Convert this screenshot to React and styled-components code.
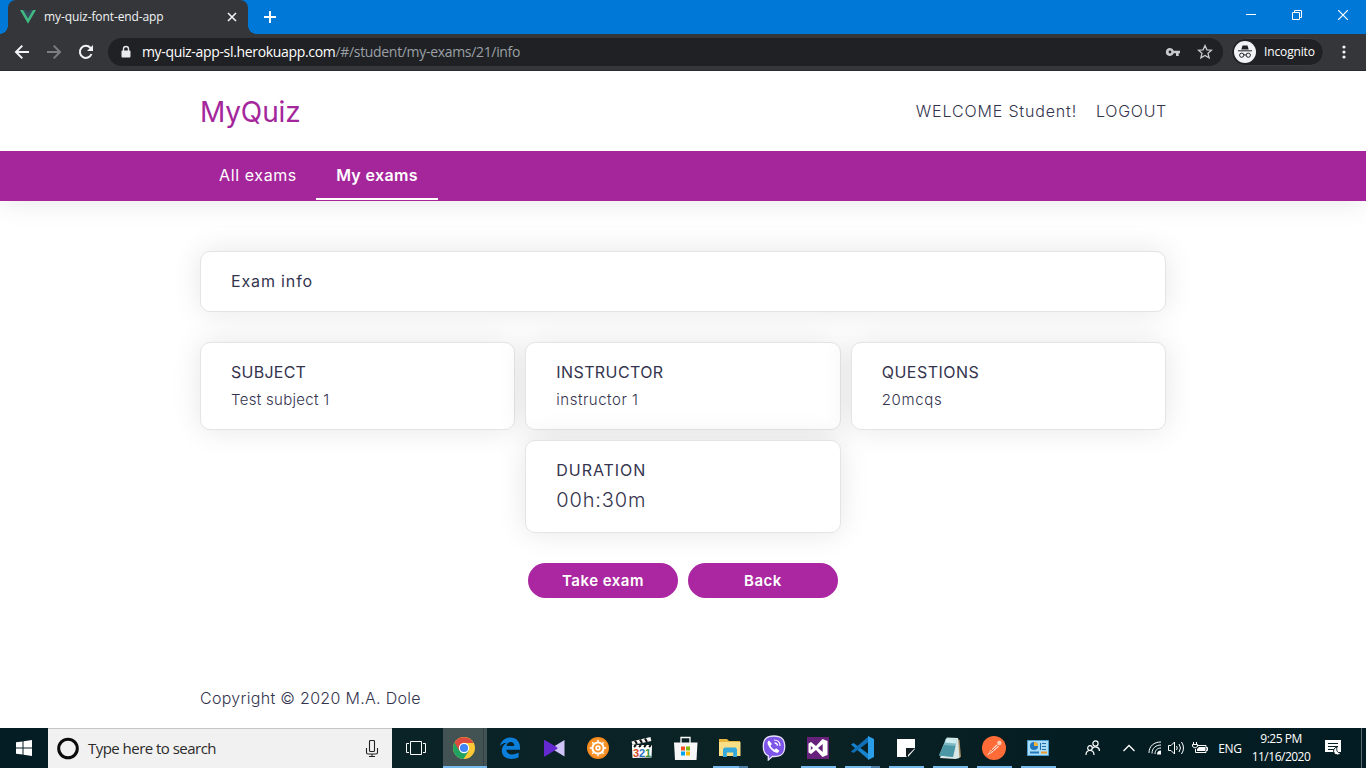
import React from "react";
import styled, { createGlobalStyle, css } from "styled-components";

const Global = createGlobalStyle`
  * { box-sizing: border-box; }
  body { margin: 0; background: #fff; overflow: hidden; }
  svg { display: block; flex: none; }
`;

const ui = `"Open Sans", "Noto Sans", sans-serif`;
const brand = `Inter, "Open Sans", sans-serif`;

const Screen = styled.div`
  width: 1366px;
  height: 768px;
  display: flex;
  flex-direction: column;
  overflow: hidden;
`;

/* ---------- browser chrome ---------- */
const TitleBar = styled.div`
  height: 34px;
  flex: none;
  display: flex;
  background: #0078d7;
  padding-left: 8px;
`;
const Tab = styled.div`
  position: relative;
  width: 240px;
  height: 34px;
  display: flex;
  align-items: center;
  padding: 0 10px 0 12px;
  background: #35363a;
  border-radius: 8px 8px 0 0;
  &::before, &::after {
    content: "";
    position: absolute;
    bottom: 0;
    width: 8px;
    height: 8px;
  }
  &::before { left: -8px; background: radial-gradient(circle at 0 0, transparent 7.5px, #35363a 8px); }
  &::after { right: -8px; background: radial-gradient(circle at 100% 0, transparent 7.5px, #35363a 8px); }
`;
const TabTitle = styled.span`
  flex: 1;
  margin-left: 8px;
  font: 12px/16px ${ui};
  letter-spacing: -0.1px;
  color: #f1f3f4;
  white-space: nowrap;
`;
const NewTab = styled.div`
  flex: 1;
  display: flex;
  align-items: center;
  padding-left: 16px;
`;
const WindowButtons = styled.div`
  display: flex;
  height: 29px;
`;
const WindowButton = styled.div`
  width: 46px;
  display: flex;
  align-items: center;
  justify-content: center;
`;
const Toolbar = styled.div`
  height: 37px;
  flex: none;
  display: flex;
  align-items: center;
  background: #35363a;
  border-bottom: 1px solid #292a2d;
  padding: 0 14px;
`;
const NavIcons = styled.div`
  display: flex;
  width: 94px;
  gap: 16px;
`;
const Address = styled.div`
  width: 1116px;
  height: 28px;
  border-radius: 14px;
  background: #202124;
  display: flex;
  align-items: center;
  padding: 0 10px 0 12px;
  gap: 16px;
`;
const Url = styled.div`
  flex: 1;
  margin-left: -6px;
  font: 14px/20px ${ui};
  letter-spacing: -0.33px;
  color: #fff;
  white-space: nowrap;
`;
const UrlPath = styled.span`
  color: #9aa0a6;
  letter-spacing: -0.32px;
`;
const Incognito = styled.div`
  width: 93px;
  height: 28px;
  margin: 0 12px 0 8px;
  border-radius: 14px;
  background: #202124;
  border: 1px solid #3c3d41;
  display: flex;
  align-items: center;
  padding-left: 2px;
  gap: 8px;
  font: 12px/16px ${ui};
  letter-spacing: -0.15px;
  color: #fff;
`;

/* ---------- page ---------- */
const Page = styled.main`
  height: 657px;
  flex: none;
  display: flex;
  flex-direction: column;
  font-family: ${brand};
  font-weight: 300;
  color: #34344e;
`;
const Container = styled.div`
  width: 966px;
  margin: 0 auto;
`;
const Header = styled.header`
  position: relative;
  z-index: 1;
  background: #fff;
`;
const HeaderRow = styled(Container)`
  height: 80px;
  display: flex;
  align-items: center;
  justify-content: space-between;
`;
const Logo = styled.div`
  font-size: 28px;
  font-weight: 400;
  letter-spacing: -0.15px;
  padding-top: 1px;
  color: #a4269b;
`;
const Account = styled.div`
  display: flex;
  gap: 19px;
  font-size: 16px;
  letter-spacing: 0.7px;
  margin-right: -1px;
`;
const Welcome = styled.span`
  letter-spacing: 0.85px;
`;
const Nav = styled.nav`
  height: 50px;
  flex: none;
  background: #a5269b;
  box-shadow: 0 0 30px rgba(0, 0, 0, 0.1);
`;
const NavRow = styled(Container)`
  display: flex;
`;
const NavItem = styled.a`
  height: 49px;
  width: ${(p) => (p.$active ? 122 : 116)}px;
  display: flex;
  align-items: center;
  justify-content: center;
  white-space: nowrap;
  padding-bottom: 1px;
  border-top: 2px solid transparent;
  border-bottom: 2px solid ${(p) => (p.$active ? "#fff" : "transparent")};
  color: #fff;
  font-size: 16px;
  font-weight: ${(p) => (p.$active ? 600 : 400)};
  letter-spacing: ${(p) => (p.$active ? 0.35 : 0.6)}px;
`;
const Content = styled(Container)`
  padding-top: 50px;
  flex: 1;
`;
const Card = styled.section`
  border: 1px solid #e4e4e4;
  border-radius: 10px;
  background: #fff;
  box-shadow: 0 0 30px rgba(0, 0, 0, 0.1);
  padding: 0 30px;
`;
const TitleCard = styled(Card)`
  height: 61px;
  display: flex;
  align-items: center;
  padding-bottom: 2px;
  font-size: 16px;
  font-weight: 400;
  letter-spacing: 0.85px;
`;
const Cards = styled.div`
  display: flex;
  flex-wrap: wrap;
  justify-content: center;
  gap: 10px;
  margin: 30px 0;
`;
const InfoCard = styled(Card)`
  width: calc((100% - 20px) / 3);
  height: ${(p) => (p.$large ? 93 : 88)}px;
  padding-top: 19px;
`;
const Label = styled.div`
  font-size: 16px;
  font-weight: 400;
  line-height: 20px;
  letter-spacing: ${(p) => p.$track || 0}px;
`;
const Value = styled.div`
  margin-top: ${(p) => (p.$large ? 8 : 8)}px;
  font-size: ${(p) => (p.$large ? 20 : 15)}px;
  line-height: ${(p) => (p.$large ? 25 : 19)}px;
  letter-spacing: ${(p) => p.$track || 0}px;
`;
const Actions = styled.div`
  display: flex;
  justify-content: center;
  gap: 10px;
`;
const Button = styled.button`
  width: 150px;
  height: 35px;
  border: 0;
  border-radius: 18px;
  background: #ab27a1;
  color: #fff;
  font: 600 15px/18px ${brand};
  letter-spacing: 0.5px;
  padding: 0;
`;
const Footer = styled(Container)`
  height: 60px;
  display: flex;
  align-items: center;
  font-size: 16px;
  letter-spacing: 0.3px;
`;

/* ---------- taskbar ---------- */
const Taskbar = styled.footer`
  height: 40px;
  flex: none;
  display: flex;
  background: linear-gradient(90deg, #041d24 0, #0a2326 400px, #0b2225 800px, #041d22 1100px, #031b22 100%);
  color: #fff;
  font-family: ${ui};
`;
const Start = styled.div`
  width: 48px;
  display: flex;
  align-items: center;
  justify-content: center;
`;
const Search = styled.div`
  width: 344px;
  background: #f1f1f1;
  border-top: 1px solid #c3c6c7;
  display: flex;
  align-items: center;
  padding: 0 13px 0 8px;
`;
const SearchText = styled.span`
  flex: 1;
  margin: -2px 0 0 8px;
  font-size: 15px;
  letter-spacing: -0.53px;
  color: #2b2b2b;
`;
const Apps = styled.div`
  display: flex;
  flex: 1;
`;
const running = css`
  &::after {
    content: "";
    position: absolute;
    left: ${(p) => (p.$active ? 0 : 5)}px;
    right: ${(p) => (p.$active ? 0 : 4)}px;
    bottom: 0;
    height: 2px;
    background: ${(p) => p.$stack ? "linear-gradient(90deg,#76b9ed 26px,#4d7fa6 26px)" : "#76b9ed"};
  }
`;
const TaskButton = styled.div`
  position: relative;
  width: 44px;
  margin-right: ${(p) => (p.$active ? 1 : 0)}px;
  padding-right: ${(p) => (p.$active ? 2 : 0)}px;
  display: flex;
  align-items: center;
  justify-content: center;
  background: ${(p) => (p.$active ? "linear-gradient(90deg,#435354 40px,#233437 40px,#435354 41px)" : "none")};
  ${(p) => p.$open && running}
`;
const TaskView = styled.div`
  width: 51px;
  display: flex;
  align-items: center;
  justify-content: center;
  padding-right: 3px;
`;
const Tray = styled.div`
  display: flex;
  align-items: center;
  width: 283px;
`;
const TrayIcon = styled.div`
  width: ${(p) => p.$w}px;
  display: flex;
  justify-content: center;
`;
const Lang = styled.div`
  width: 30px;
  margin-left: 12px;
  text-align: center;
  font-size: 12px;
  letter-spacing: -0.3px;
`;
const Clock = styled.div`
  width: 72px;
  text-align: center;
  font-size: 12px;
  line-height: 18px;
  letter-spacing: -0.5px;
  white-space: nowrap;
`;
const Peek = styled.div`
  width: 5px;
  height: 40px;
  margin-left: auto;
  border-left: 1px solid #59696d;
`;

const s = { fill: "none", stroke: "currentColor" };

const VueIcon = () => (
  <svg width="16" height="16" viewBox="0 0 16 16"><path d="M0 1h3.2L8 9.3 12.8 1H16L8 14.8z" fill="#41b883" /><path d="M3.2 1h3L8 4.2 9.8 1h3L8 9.3z" fill="#35495e" /></svg>
);
const ChromeIcon = () => (
  <svg width="24" height="24" viewBox="0 0 24 24">
    <circle cx="12" cy="12" r="11" fill="#fcc934" />
    <path d="M12 12L2.5 6.5A11 11 0 0 0 11.5 23L16.8 14.8z" fill="#1ea362" />
    <path d="M12 12L7.2 14.7 2.5 6.5A11 11 0 0 1 21.6 7H12z" fill="#dd4b3e" />
    <circle cx="12" cy="12" r="5.2" fill="#fff" /><circle cx="12" cy="12" r="4.1" fill="#4285f4" />
  </svg>
);
const EdgeIcon = () => (
  <svg width="24" height="24" viewBox="0 0 24 24"><path fill="#0b7fdb" d="M2 10.2C3 4.8 7 1.5 12.2 1.5c6 0 9.8 4.1 9.8 9.8v2.5H8.3c.2 3.2 2.8 4.6 6 4.6 2.4 0 4.6-.7 6.3-1.8v4.6c-2 1.1-4.6 1.700-7.300 1.700C7.300 22.900 3.800 19.500 3.800 14.700c0-3.500 1.900-6.300 4.900-7.900C5.700 7 3.400 8.200 2 10.200zM8.500 9.900h7.800c0-2.500-1.400-4-3.700-4-2.200 0-3.700 1.500-4.100 4z" /></svg>
);
const KmIcon = () => (
  <svg width="24" height="24" viewBox="0 0 24 24"><path d="M22.500 4v16.500L9 12.200z" fill="#d0c3f7" /><path d="M2 4.800Q2 3.500 3.200 4.200L15 11.200Q16.200 12.200 15 13L3.200 20.300Q2 21 2 19.700z" fill="#6529d1" /></svg>
);
const WheelIcon = () => (
  <svg width="24" height="24" viewBox="0 0 24 24">
    <circle cx="12" cy="12" r="11" fill="#f58a1c" /><circle cx="12" cy="12" r="9.6" fill="#f7922a" />
    <g stroke="#fff" fill="none"><circle cx="12" cy="12" r="5.6" strokeWidth="2" />
      <path d="M12 3.700v16.600M3.700 12h16.600M6.200 6.200l11.600 11.600M17.800 6.200L6.200 17.800" strokeWidth="1.300" strokeDasharray="2.500 11.600" /></g>
    <circle cx="12" cy="12" r="2.700" fill="#fff" /><circle cx="12" cy="12" r="1" fill="#f58a1c" />
  </svg>
);
const ClapText = styled.text`
  font: 700 11px "Liberation Sans", sans-serif;
`;
const ClapIcon = () => (
  <svg width="24" height="24" viewBox="0 0 24 24">
    <path d="M2 11h20l-.5 10.500L2.500 22z" fill="#fff" />
    <path d="M1.500 5.500L20.500 1l.8 4L2.500 9z" fill="#f5f5f5" /><path d="M5 4.800L7 8M10 3.600L12 7M15 2.400L17 6" stroke="#111" strokeWidth="2" />
    <path d="M2 9h20v2.500H2z" fill="#fff" /><path d="M4 11l2-2M9 11l2-2M14 11l2-2M19 11l2-2" stroke="#111" strokeWidth="2" />
    <ClapText x="3" y="20.500" fill="#d2481e">3</ClapText><ClapText x="9" y="20.500" fill="#2770bd">2</ClapText><ClapText x="15" y="20.500" fill="#3b8f32">1</ClapText>
  </svg>
);
const StoreIcon = () => (
  <svg width="24" height="26" viewBox="0 0 24 26"><path d="M7 8V2.500h9V8" fill="none" stroke="#fff" strokeWidth="1.300" /><path d="M0 7.500h23.500L22.500 25H1z" fill="#f6f6f6" />
    <path d="M7 11.500h4v4H7z" fill="#f25022" /><path d="M12 11.500h4v4h-4z" fill="#7fba00" /><path d="M7 16.500h4v4H7z" fill="#00a4ef" /><path d="M12 16.500h4v4h-4z" fill="#ffb900" /></svg>
);
const FolderIcon = () => (
  <svg width="24" height="24" viewBox="0 0 24 24"><path d="M1 3h8l2 2h11v15H1z" fill="#e8b53c" /><path d="M1 6h21.500v14H1z" fill="#fbdf87" /><path d="M5 21v-8l1.500-1.500h11L19 13v8h-3.800v-4.500H8.800V21z" fill="#35a9dc" /></svg>
);
const ViberIcon = () => (
  <svg width="24" height="26" viewBox="0 0 24 26"><path d="M12 1C4.500 1 1.300 4 1.300 11.500c0 5 1.500 8 5 9.300V25l4-3.500H12c7.500 0 10.700-2.700 10.700-10S19.500 1 12 1z" fill="#7d55e8" stroke="#e7e0fb" strokeWidth="1.300" />
    <path d="M7 5.500c-2 1.300-1.700 3-.5 5.200 1.700 3.200 4 5.500 7.300 6.800 1.600.7 2.800-.2 3.500-1.800l-3.200-2.400-1.500 1.500c-2-.8-3.300-2.200-4.100-4.200L10 9z" fill="#fff" /><path d="M12 5c4 0 6 2 6.100 6M12.500 7.800c2 .1 2.900 1 3 3" fill="none" stroke="#fff" strokeWidth="1.200" /></svg>
);
const VsIcon = () => (
  <svg width="24" height="26" viewBox="0 0 24 26"><path d="M1 2h22v22H1z" fill="#68217a" /><path fill="#fff" fillRule="evenodd" d="M2.500 8.500L5 7l5 4 6.500-7L21.500 6v14L16.500 22 10 15l-5 4-2.500-1.500zm2.300 2.500v4l2.300-2zM12 13l4.700 4V9z" /></svg>
);
const CodeIcon = () => (
  <svg width="25" height="26" viewBox="0 0 25 26"><path d="M1 9.500L3.500 8 18.500 19v5.500z" fill="#1684cf" /><path d="M1 16.500L3.500 18 18.500 7V1.500z" fill="#0f70b7" /><path d="M18 1L24 4v18l-6 3z" fill="#2a9ee8" /></svg>
);
const NoteIcon = () => (
  <svg width="20" height="20" viewBox="0 0 20 20"><path d="M1 1h18v9.500h-8V19H1z" fill="#fff" /><path d="M12 19v-8h7z" fill="#fff" /><path d="M10 19v-9h9z" fill="#111d20" /></svg>
);
const NotepadIcon = () => (
  <svg width="26" height="24" viewBox="0 0 26 24"><path d="M20 2.500l2.500 1.500L24 21l-6 1z" fill="#a58d60" /><path d="M10 1.500l11 .5 1.500 20-4 1L3 22z" fill="#d9e8e6" /><path d="M9 2.500l11 1L16 21 2 19.500z" fill="#7fbac4" /><path d="M7 9l11.500 1L16 21 2 19.500z" fill="#4b97a6" /><path d="M9 2.500l11 1-1 4-11-1z" fill="#cfecef" /></svg>
);
const PostmanIcon = () => (
  <svg width="26" height="26" viewBox="0 0 26 26"><circle cx="13" cy="13" r="12" fill="#ff6c37" /><path d="M6 20.500l3.500-5 6-6 2.500 2-6 5.500z" fill="#fbded2" /><path d="M8.500 18l9-8M10 14l3.500 3" stroke="#ed6132" strokeWidth="1" /><circle cx="18.300" cy="8" r="2.200" fill="#ffd0b9" /></svg>
);
const PanelIcon = () => (
  <svg width="24" height="24" viewBox="0 0 24 24"><path d="M1.500 4.500h21v15h-21z" fill="#a9dcf8" stroke="#4a9fd3" /><circle cx="8" cy="10" r="4" fill="#2077bd" /><path d="M8 10V6a4 4 0 0 1 4 4z" fill="#f8b332" /><path d="M16 7.500h4M16 10.500h4M16 13.500h4M14.500 7v7" stroke="#236da8" fill="none" /><path d="M4 16.500h9" stroke="#2077bd" strokeWidth="2" /><path d="M15 16.500h6" stroke="#ee9c29" strokeWidth="2" /></svg>
);

export default function App() {
  return (
    <>
      <Global />
      <Screen>
        <TitleBar>
          <Tab>
            <VueIcon />
            <TabTitle>my-quiz-font-end-app</TabTitle>
            <svg width="12" height="12" viewBox="0 0 12 12" color="#f1f3f4"><path d="M2 2l8 8M10 2l-8 8" {...s} strokeWidth="1.600" /></svg>
          </Tab>
          <NewTab><svg width="12" height="12" color="#fff"><path d="M6 0v12M0 6h12" {...s} strokeWidth="2" /></svg></NewTab>
          <WindowButtons>
            <WindowButton><svg width="10" height="10" color="#fff"><path d="M0 4.500h10" {...s} /></svg></WindowButton>
            <WindowButton><svg width="10" height="10" color="#fff"><path d="M.5 2.500h7v7h-7zM2.500 2.500v-2h7v7h-2" {...s} /></svg></WindowButton>
            <WindowButton><svg width="10" height="10" color="#fff"><path d="M0 0l10 10M10 0L0 10" {...s} strokeWidth="1.200" /></svg></WindowButton>
          </WindowButtons>
        </TitleBar>
        <Toolbar>
          <NavIcons>
            <svg width="16" height="16" color="#f1f3f4"><path d="M15 8H2M8.300 1.600L2 8l6.300 6.400" {...s} strokeWidth="2" /></svg>
            <svg width="16" height="16" color="#7c7e82"><path d="M1 8h13M7.700 1.600L14 8l-6.300 6.400" {...s} strokeWidth="2" /></svg>
            <svg width="16" height="16" color="#f1f3f4"><path d="M13.500 10A6 6 0 1 1 12.300 3.800L14 5.500" {...s} strokeWidth="2" /><path d="M15 1v6H9z" fill="currentColor" /></svg>
          </NavIcons>
          <Address>
            <svg width="12" height="14" viewBox="0 0 12 14"><path d="M3.500 6V4a2.500 2.500 0 0 1 5 0v2" fill="none" stroke="#e8eaed" strokeWidth="1.400" /><rect x="1.500" y="5.500" width="9" height="7" rx="1" fill="#e8eaed" /></svg>
            <Url>my-quiz-app-sl.herokuapp.com<UrlPath>/#/student/my-exams/21/info</UrlPath></Url>
            <svg width="16" height="16" viewBox="0 0 16 16"><path fillRule="evenodd" fill="#c8cacd" d="M5 4a4 4 0 1 0 3.700 5.200H11V12h2.700V9.200H15V6.800H8.700A4 4 0 0 0 5 4zm0 2.600a1.400 1.400 0 1 1 0 2.800 1.400 1.400 0 0 1 0-2.800z" /></svg>
            <svg width="16" height="16" viewBox="0 0 16 16"><path d="M8 1.600l1.900 4.200 4.600.4-3.500 3 1.100 4.600L8 11.400l-4.100 2.400L5 9.200l-3.500-3 4.600-.4z" fill="none" stroke="#c8cacd" strokeWidth="1.300" /></svg>
          </Address>
          <Incognito>
            <svg width="22" height="22" viewBox="0 0 22 22"><circle cx="11" cy="11" r="11" fill="#f1f3f4" /><path d="M4 9.800h14" stroke="#202124" /><path d="M7.300 8.600L8.500 4.500h5L14.700 8.600z" fill="#202124" /><g fill="none" stroke="#202124"><circle cx="7.700" cy="14.200" r="2.100" /><circle cx="14.300" cy="14.200" r="2.100" /><path d="M9.800 13.900h2.400" /></g></svg>
            Incognito
          </Incognito>
          <svg width="16" height="16" fill="#f1f3f4"><circle cx="8" cy="3" r="1.600" /><circle cx="8" cy="8" r="1.600" /><circle cx="8" cy="13" r="1.600" /></svg>
        </Toolbar>

        <Page>
          <Header>
            <HeaderRow>
              <Logo>MyQuiz</Logo>
              <Account><Welcome>WELCOME Student!</Welcome><span>LOGOUT</span></Account>
            </HeaderRow>
          </Header>
          <Nav>
            <NavRow><NavItem>All exams</NavItem><NavItem $active>My exams</NavItem></NavRow>
          </Nav>
          <Content>
            <TitleCard>Exam info</TitleCard>
            <Cards>
              <InfoCard><Label $track={0.25}>SUBJECT</Label><Value $track={0.3}>Test subject 1</Value></InfoCard>
              <InfoCard><Label $track={0.4}>INSTRUCTOR</Label><Value $track={0.52}>instructor 1</Value></InfoCard>
              <InfoCard><Label $track={0.5}>QUESTIONS</Label><Value $track={0.65}>20mcqs</Value></InfoCard>
              <InfoCard $large><Label $track={0.95}>DURATION</Label><Value $large $track={0.85}>00h:30m</Value></InfoCard>
            </Cards>
            <Actions><Button>Take exam</Button><Button>Back</Button></Actions>
          </Content>
          <Footer>Copyright © 2020 M.A. Dole</Footer>
        </Page>

        <Taskbar>
          <Start><svg width="16" height="16" fill="#fff"><path d="M0 2.300L6.500 1.400v6.100H0zM7.500 1.200L16 0v7.500H7.500zM0 8.500h6.500v6.100L0 13.700zM7.500 8.500H16V16l-8.500-1.200z" /></svg></Start>
          <Search>
            <svg width="24" height="24"><circle cx="12" cy="11.500" r="9.300" fill="none" stroke="#0b0b0b" strokeWidth="3" /></svg>
            <SearchText>Type here to search</SearchText>
            <svg width="14" height="18" color="#222"><path d="M4.500 1.500q0-1 1-1h3q1 0 1 1v9q0 1-1 1h-3q-1 0-1-1zM1.500 8v4.500q0 1.500 1.500 1.500h8q1.500 0 1.500-1.500V8M7 14v2.500M4 16.500h6" {...s} strokeWidth="1.100" /></svg>
          </Search>
          <TaskView><svg width="20" height="14" color="#fff"><path d="M4.500.5h11v13h-11zM3 2.500H.5v9H3M17 2.500h2.500v9H17" {...s} /></svg></TaskView>
          <Apps>
            <TaskButton $active $open><ChromeIcon /></TaskButton>
            <TaskButton><EdgeIcon /></TaskButton>
            <TaskButton><KmIcon /></TaskButton>
            <TaskButton><WheelIcon /></TaskButton>
            <TaskButton><ClapIcon /></TaskButton>
            <TaskButton><StoreIcon /></TaskButton>
            <TaskButton $open $stack><FolderIcon /></TaskButton>
            <TaskButton><ViberIcon /></TaskButton>
            <TaskButton $open><VsIcon /></TaskButton>
            <TaskButton $open $stack><CodeIcon /></TaskButton>
            <TaskButton $open><NoteIcon /></TaskButton>
            <TaskButton $open><NotepadIcon /></TaskButton>
            <TaskButton $open><PostmanIcon /></TaskButton>
            <TaskButton $open><PanelIcon /></TaskButton>
          </Apps>
          <Tray>
            <TrayIcon $w={20}><svg width="16" height="16" color="#fff"><g {...s} strokeWidth="1.200"><circle cx="10.500" cy="3.500" r="2.600" /><circle cx="5" cy="8" r="2.300" /><path d="M1 15c0-6 8-6 8 0M7.500 8.500C9 6 14.500 6.500 14.500 11" /></g></svg></TrayIcon>
            <TrayIcon $w={52}><svg width="12" height="8" color="#fff"><path d="M.5 7L6 1.500 11.500 7" {...s} strokeWidth="1.300" /></svg></TrayIcon>
            <TrayIcon $w={0}><svg width="14" height="14" color="#fff"><g {...s}><path d="M1 12C1 5 6 1 13 1M4 12.500C4 7 8 4 13 4M7 13c0-4 2.500-6 6-6" /></g><path d="M13 9.500v4H9q0-4 4-4z" fill="#fff" /></svg></TrayIcon>
            <TrayIcon $w={42}><svg width="16" height="14" color="#fff"><path d="M.5 4.500h2.500L6.500 1v12L3 9.500H.5zM8.500 5q1.500 2 0 4M11 3q3 4 0 8M13.500 1q4 6 0 12" {...s} /></svg></TrayIcon>
            <TrayIcon $w={6}><svg width="16" height="12" color="#fff"><path d="M5.500 3.500h8.500v7H3.500V7M14 5.500h1.500v3H14M1.500 0v2.500M4.500 0v2.500M.5 2.500h5v2q-2.500 3-5 0z" {...s} /><path d="M7 5h6v4H5V7z" fill="#fff" /></svg></TrayIcon>
            <Lang>ENG</Lang>
            <Clock>9:25 PM<br />11/16/2020</Clock>
            <TrayIcon $w={32}><svg width="17" height="16"><path d="M0 0h16v12h-2v3l-3-3H0z" fill="#fff" /><path d="M3 3.500h10M3 6.500h10M3 9.500h6" stroke="#071f25" /><path d="M12 7a4 4 0 1 0 4 6c-3 .5-5-2-4-6z" fill="#fff" stroke="#071f25" /></svg></TrayIcon>
            <Peek />
          </Tray>
        </Taskbar>
      </Screen>
    </>
  );
}
